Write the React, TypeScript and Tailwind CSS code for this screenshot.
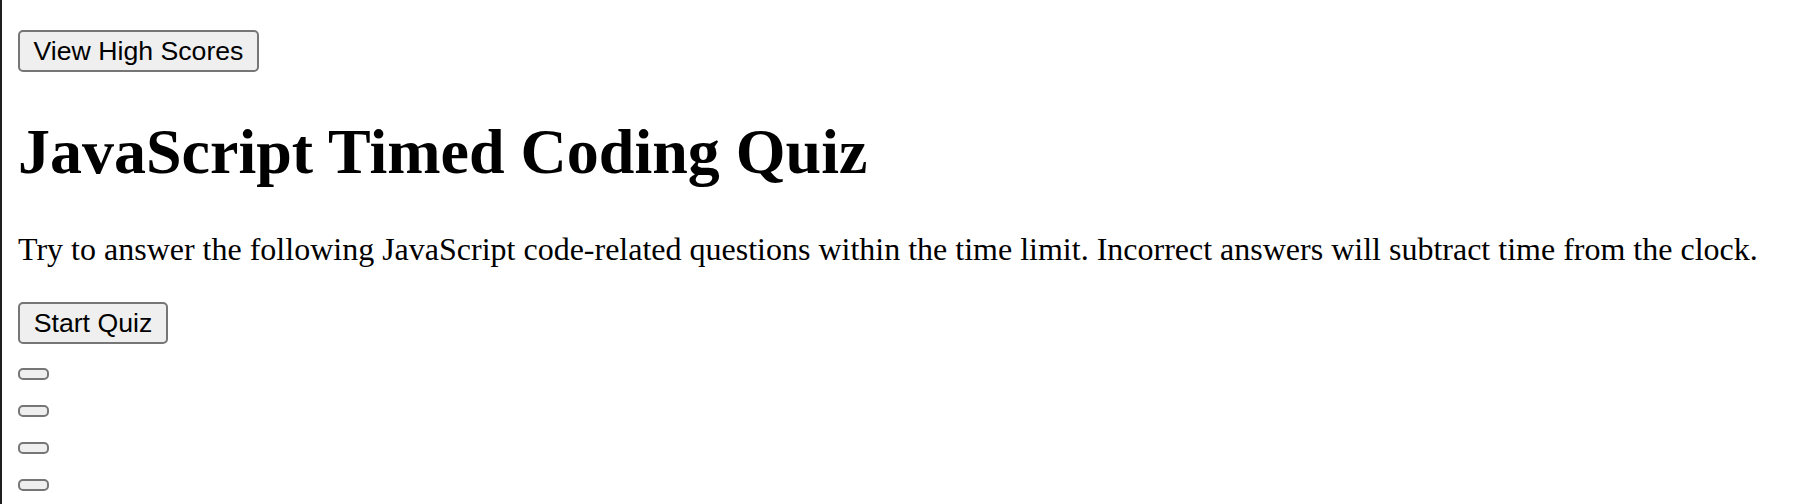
export default function App() {
  const choices = [0, 1, 2, 3]
  return (
    <div className="flex min-h-screen bg-white">
      <div className="w-[2px] shrink-0 bg-[#1f1f1f]"></div>
      <div className="flex flex-col items-start pl-4 pt-[30px] text-black font-['Liberation_Serif',serif]">
        <button className="h-[42px] w-[241px] rounded-[5px] border-2 border-[#767676] bg-[#efefef] text-[26.67px] leading-none text-black font-['Liberation_Sans',Arial,sans-serif]">
          View High Scores
        </button>
        <h1 className="mt-[43px] text-[64px] leading-[73.6px] font-bold whitespace-nowrap">
          JavaScript Timed Coding Quiz
        </h1>
        <p className="mt-[42px] text-[32px] leading-[36.8px] whitespace-nowrap">
          Try to answer the following JavaScript code-related questions within the time limit. Incorrect answers will subtract time from the clock.
        </p>
        <button className="mt-[35px] h-[42px] w-[150px] rounded-[5px] border-2 border-[#767676] bg-[#efefef] text-[26.67px] leading-none text-black font-['Liberation_Sans',Arial,sans-serif]">
          Start Quiz
        </button>
        <div className="mt-6 flex flex-col gap-[25px]">
          {choices.map((c) => (
            <button
              key={c}
              className="block h-[12px] w-[31px] rounded-[5px] border-2 border-[#767676] bg-[#efefef]"
            ></button>
          ))}
        </div>
      </div>
    </div>
  )
}
